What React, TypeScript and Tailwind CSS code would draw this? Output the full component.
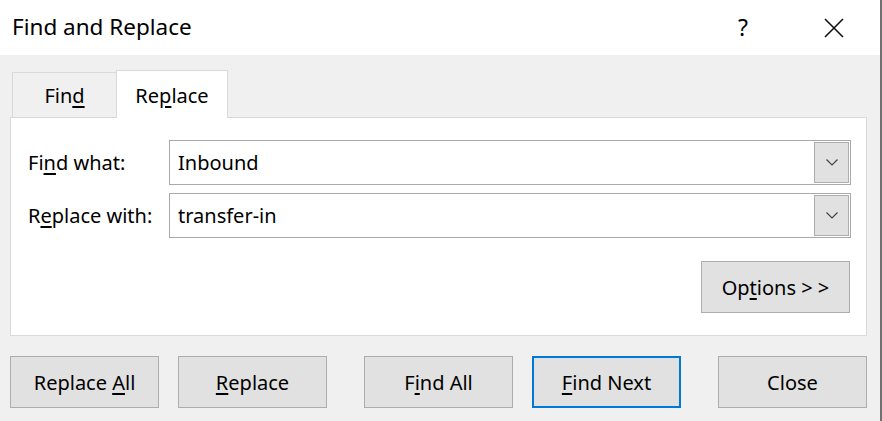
import React from 'react';

const font = { fontFamily: '"Noto Sans", "Open Sans", sans-serif' };

function Key({ children }: { children: React.ReactNode }) {
  return <span className="underline decoration-[1.5px] underline-offset-[3px]">{children}</span>;
}

function Chevron() {
  return (
    <svg width="12" height="7" viewBox="0 0 12 7" fill="none" stroke="#444" strokeWidth="1.2">
      <path d="M0.5 0.5 L6 6 L11.5 0.5" />
    </svg>
  );
}

function ComboBox({ value }: { value: string }) {
  return (
    <div className="flex h-[45px] flex-1 items-center border border-[#a9a9a9] bg-white pl-[8px] pr-[1px]">
      <span className="flex-1 text-[20px] text-black">{value}</span>
      <div className="flex h-[41px] w-[35px] items-center justify-center border border-[#adadad] bg-[#e1e1e1]">
        <Chevron />
      </div>
    </div>
  );
}

function Button({ children, active }: { children: React.ReactNode; active?: boolean }) {
  return (
    <button
      className={
        active
          ? 'flex h-[52px] w-[149px] items-center justify-center border-2 border-[#0078d7] bg-[#e1e1e1] pt-[2px] text-[20px] text-black'
          : 'flex h-[52px] w-[149px] items-center justify-center border border-[#adadad] bg-[#e1e1e1] pt-[2px] text-[20px] text-black'
      }
    >
      <span className="whitespace-pre">{children}</span>
    </button>
  );
}

export default function App() {
  return (
    <div className="flex h-[421px] w-[882px] overflow-hidden" style={font}>
      <div className="flex w-[880px] flex-col bg-[#f0f0f0]">
        {/* title bar */}
        <div className="flex h-[55px] items-center bg-white pl-[12px] text-black">
          <span className="flex-1 text-[22.5px] leading-none">Find and Replace</span>
          <span className="mr-[76px] text-[23px] leading-none">?</span>
          <svg className="mr-[36px]" width="20" height="20" viewBox="0 0 20 20" stroke="#111" strokeWidth="1.6">
            <path d="M1 1 L19 19 M19 1 L1 19" />
          </svg>
        </div>

        {/* tabs */}
        <div className="ml-[12px] mt-[15px] flex items-end">
          <div className="flex h-[45px] w-[104px] items-center justify-center border-l border-t border-[#d9d9d9] pt-[2px] text-[20px] text-black">
            <span>
              Fin<Key>d</Key>
            </span>
          </div>
          <div className="relative z-10 -mb-px flex h-[48px] w-[112px] items-center justify-center border border-b-0 border-[#d9d9d9] bg-white pt-[2px] text-[20px] text-black">
            <span>
              Re<Key>p</Key>lace
            </span>
          </div>
        </div>

        {/* panel */}
        <div className="ml-[10px] flex h-[219px] w-[857px] flex-col border border-[#d9d9d9] bg-white pl-[17px] pr-[15px] pt-[22px]">
          <div className="flex items-center">
            <span className="w-[141px] text-[20px] text-black">
              Fi<Key>n</Key>d what:
            </span>
            <ComboBox value="Inbound" />
          </div>
          <div className="mt-[8px] flex items-center">
            <span className="w-[141px] text-[20px] text-black">
              R<Key>e</Key>place with:
            </span>
            <ComboBox value="transfer-in" />
          </div>
          <div className="mt-[23px] flex justify-end pr-[1px]">
            <Button>
              Op<Key>t</Key>ions &gt; &gt;
            </Button>
          </div>
        </div>

        {/* bottom buttons */}
        <div className="ml-[10px] mt-[20px] flex">
          <Button>
            Replace <Key>A</Key>ll
          </Button>
          <div className="ml-[19px]">
            <Button>
              <Key>R</Key>eplace
            </Button>
          </div>
          <div className="ml-[37px]">
            <Button>
              F<Key>i</Key>nd All
            </Button>
          </div>
          <div className="ml-[19px]">
            <Button active>
              <Key>F</Key>ind Next
            </Button>
          </div>
          <div className="ml-[37px]">
            <Button>Close</Button>
          </div>
        </div>
      </div>
      <div className="w-[2px] bg-[#707070]" />
    </div>
  );
}
